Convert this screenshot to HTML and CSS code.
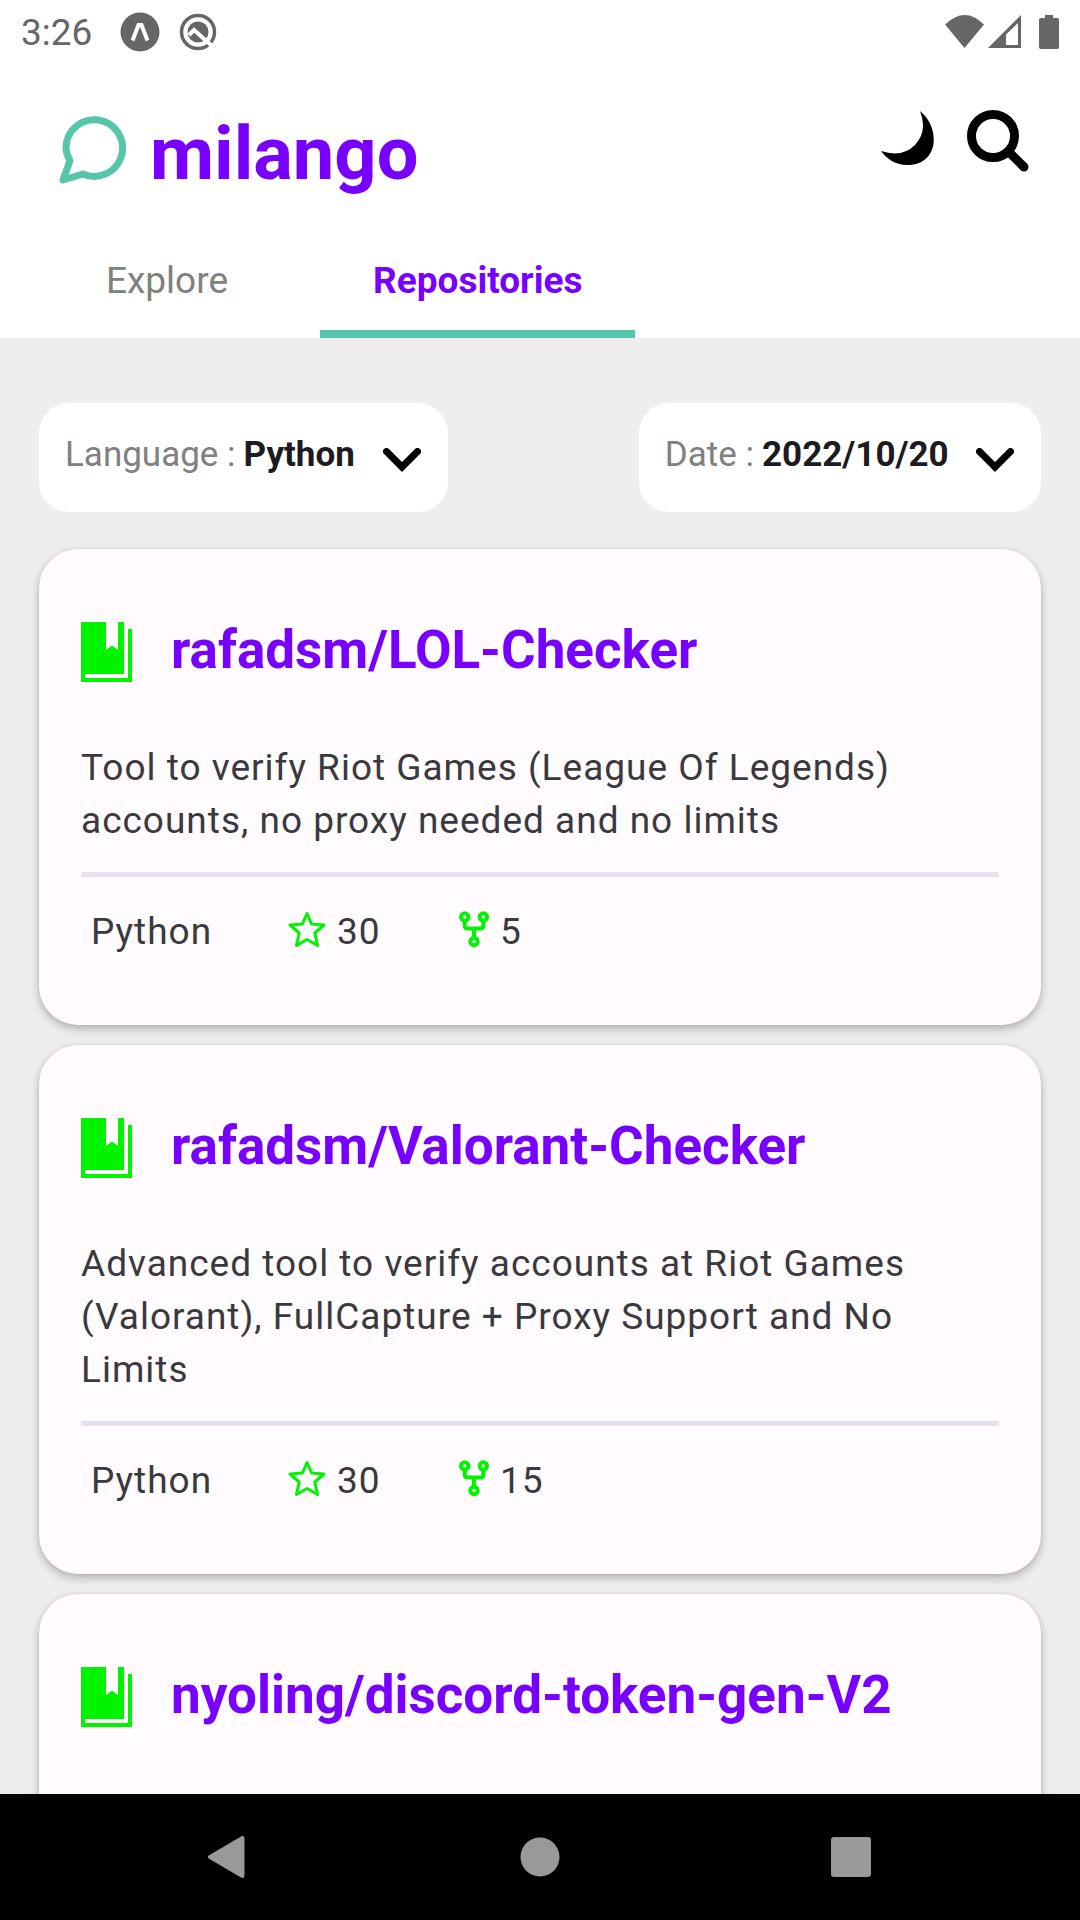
FILE: index.html
```html
<!DOCTYPE html>
<html lang="en">
<head>
<meta charset="utf-8">
<meta name="viewport" content="width=device-width, initial-scale=1">
<title>milango</title>
<link rel="stylesheet" href="styles.css">
</head>
<body>
<svg class="sprite" aria-hidden="true">
  <symbol id="book" viewBox="0 0 51 60"><path fill-rule="evenodd" d="M0 0H25V28L31 23.500L37 28V0H43V52H4V56H47V7H51V60H0Z"/></symbol>
  <symbol id="star" viewBox="0 0 38 38"><path d="M19 3.500L23.600 14L36 15L26.800 23L29.600 35.500L19 29.500L8.400 35.500L11.200 23L2 15L14.400 14Z" fill="none" stroke="currentColor" stroke-width="3" stroke-linejoin="round"/></symbol>
  <symbol id="fork" viewBox="0 0 30 38"><g fill="none" stroke="currentColor" stroke-width="4"><circle cx="5.700" cy="7" r="3.700"/><circle cx="24.300" cy="7" r="3.700"/><circle cx="15" cy="31.500" r="3.700"/><path d="M5.700 11V15.500Q5.700 18.500 8.700 18.500H21.300Q24.300 18.500 24.300 15.500V11M15 18.500V27.500"/></g></symbol>
  <symbol id="chevron" viewBox="0 0 38 24"><path d="M3.500 3.500L19 19L34.500 3.500" fill="none" stroke="currentColor" stroke-width="7" stroke-linecap="round"/></symbol>
</svg>
<div class="app">
  <header class="header">
    <div class="status">
      <span class="time">3:26</span>
      <svg class="notice" viewBox="0 0 40 40" aria-hidden="true"><circle cx="20" cy="20" r="19.500" fill="currentColor"/><path d="M12.500 28.500L18.500 13H21.500L27.500 28.500" fill="none" stroke="#fff" stroke-width="4"/></svg>
      <svg class="notice" viewBox="0 0 40 40" aria-hidden="true"><circle cx="20" cy="20" r="16.500" fill="none" stroke="currentColor" stroke-width="3.500"/><circle cx="20" cy="20" r="10.500" fill="currentColor"/><path d="M11 23L16 18L34 34" fill="none" stroke="#fff" stroke-width="4"/></svg>
      <span class="signals">
        <svg width="40" height="34" viewBox="0 0 40 34" aria-hidden="true"><path fill="currentColor" d="M0 9.500Q20 -9.500 39 9.500L19.500 33Z"/></svg>
        <svg width="34" height="34" viewBox="0 0 34 34" aria-hidden="true"><path fill="currentColor" fill-rule="evenodd" d="M0 33L33 0V33ZM18 19.500V30H30V8Z"/></svg>
        <svg class="battery" width="20" height="34" viewBox="0 0 20 34" aria-hidden="true"><path fill="currentColor" d="M6 0H14V3H18Q20 3 20 5V32Q20 34 18 34H2Q0 34 0 32V5Q0 3 2 3H6Z"/></svg>
      </span>
    </div>
    <div class="brand-row">
      <svg class="logo" viewBox="0 0 68 68" aria-hidden="true"><path d="M4 64L11 44.500Q7 38 7 31.500A28.300 28.300 0 1 1 24 58Z" fill="none" stroke="currentColor" stroke-width="7" stroke-linejoin="round"/></svg>
      <h1 class="brand">milango</h1>
      <div class="actions">
        <button class="icon-button" type="button" aria-label="Dark mode"><svg width="54" height="62" viewBox="0 0 54 62" aria-hidden="true"><path fill="currentColor" d="M39 1C60 18 58 55 26 55C14 55 5 48 0 41Q21 48 34 35Q47 21 39 1Z"/></svg></button>
        <button class="icon-button" type="button" aria-label="Search"><svg width="62" height="62" viewBox="0 0 62 62" aria-hidden="true"><g fill="none" stroke="currentColor" stroke-width="9" stroke-linecap="round"><circle cx="26" cy="26" r="21.500"/><path d="M42 42L57 57"/></g></svg></button>
      </div>
    </div>
    <nav class="tabs">
      <a class="tab" href="#explore">Explore</a>
      <a class="tab tab-active" href="#repositories" aria-current="page">Repositories</a>
    </nav>
  </header>
  <main class="content">
    <div class="filters">
      <label class="filter"><span>Language :</span>
        <select class="filter-value"><option>Python</option></select>
        <svg class="chevron" aria-hidden="true"><use href="#chevron"/></svg></label>
      <label class="filter"><span>Date :</span>
        <select class="filter-value"><option>2022/10/20</option></select>
        <svg class="chevron" aria-hidden="true"><use href="#chevron"/></svg></label>
    </div>
    <article class="card">
      <h2 class="card-title"><svg class="book" aria-hidden="true"><use href="#book"/></svg>rafadsm/LOL-Checker</h2>
      <p class="description">Tool to verify Riot Games (League Of Legends) accounts, no proxy needed and no limits</p>
      <div class="stats">
        <span class="language">Python</span>
        <span class="stat"><svg class="star" aria-hidden="true"><use href="#star"/></svg>30</span>
        <span class="stat"><svg class="fork" aria-hidden="true"><use href="#fork"/></svg>5</span>
      </div>
    </article>
    <article class="card">
      <h2 class="card-title"><svg class="book" aria-hidden="true"><use href="#book"/></svg>rafadsm/Valorant-Checker</h2>
      <p class="description">Advanced tool to verify accounts at Riot Games (Valorant), FullCapture + Proxy Support and No Limits</p>
      <div class="stats">
        <span class="language">Python</span>
        <span class="stat"><svg class="star" aria-hidden="true"><use href="#star"/></svg>30</span>
        <span class="stat"><svg class="fork" aria-hidden="true"><use href="#fork"/></svg>15</span>
      </div>
    </article>
    <article class="card">
      <h2 class="card-title"><svg class="book" aria-hidden="true"><use href="#book"/></svg>nyoling/discord-token-gen-V2</h2>
    </article>
  </main>
  <footer class="system-nav">
    <button class="nav-button" type="button" aria-label="Back"><svg width="42" height="42" viewBox="0 0 42 42" aria-hidden="true"><path fill="currentColor" d="M1.500 19L33 .5Q36.500 -1 36.500 3V39Q36.500 43 33 41.500L1.500 23Q-2 21 1.500 19Z"/></svg></button>
    <button class="nav-button" type="button" aria-label="Home"><svg width="42" height="42" viewBox="0 0 42 42" aria-hidden="true"><circle cx="21" cy="21" r="19.500" fill="currentColor"/></svg></button>
    <button class="nav-button" type="button" aria-label="Recent apps"><svg width="42" height="42" viewBox="0 0 42 42" aria-hidden="true"><rect x="1" y="1" width="40" height="40" rx="3" fill="currentColor"/></svg></button>
  </footer>
</div>
</body>
</html>
```
FILE: styles.css
```css
* {
  box-sizing: border-box;
}

body {
  margin: 0;
  background: #eee;
  color: #1c1b1f;
  font-family: Roboto, "Liberation Sans", sans-serif;
  font-size: 37px;
}

svg {
  display: block;
  flex: none;
}

button {
  padding: 0;
  border: 0;
  background: none;
  color: inherit;
}

.sprite {
  display: none;
}

.app {
  display: flex;
  flex-direction: column;
  height: 100vh;
}

.header {
  flex: none;
  background: #fff;
}

/* Status bar */
.status {
  display: flex;
  align-items: center;
  height: 64px;
  padding: 0 21px;
  color: #666;
}

.time {
  margin-right: 28px;
}

.notice {
  width: 40px;
  height: 40px;
  margin-right: 18px;
}

.signals {
  display: flex;
  gap: 3px;
  margin-left: auto;
}

.battery {
  margin-left: 14px;
}

/* Brand */
.brand-row {
  display: flex;
  align-items: center;
  height: 180px;
  padding: 0 51px 0 59px;
}

.logo {
  width: 68px;
  height: 68px;
  margin-bottom: 8px;
  color: #55c6a9;
}

.brand {
  margin: 0 0 0 23px;
  color: #70f;
  font-size: 74px;
  line-height: 88px;
}

.actions {
  display: flex;
  gap: 32px;
  margin-left: auto;
  padding-bottom: 26px;
  color: #000;
}

/* Tabs */
.tabs {
  display: flex;
  padding-left: 14px;
}

.tab {
  min-width: 306px;
  padding: 15px 53px 27px;
  border-bottom: 8px solid transparent;
  color: #808080;
  line-height: 44px;
  text-align: center;
  text-decoration: none;
}

.tab-active {
  border-color: #55c6a9;
  color: #70f;
  font-weight: 700;
}

/* Repository list */
.content {
  display: flex;
  flex: 1;
  flex-direction: column;
  gap: 20px;
  min-height: 0;
  padding: 65px 39px 20px;
  overflow: hidden;
}

.filters {
  display: flex;
  flex: none;
  justify-content: space-between;
  margin-bottom: 17px;
}

.filter {
  display: flex;
  align-items: center;
  height: 109px;
  padding: 0 27px 6px 26px;
  border-radius: 30px;
  background: #fff;
  color: #808080;
  font-size: 35px;
}

.filter-value {
  margin: 0 27px 0 8px;
  padding: 0;
  border: 0;
  background: none;
  color: #1c1b1f;
  font: inherit;
  font-weight: 700;
  appearance: none;
}

.chevron {
  width: 38px;
  height: 24px;
  margin-top: 10px;
  color: #000;
}

.card {
  flex: none;
  min-height: 320px;
  padding: 69px 42px 67px;
  border-radius: 39px;
  background: #fffbfe;
  box-shadow: 0 4px 10px rgba(0, 0, 0, .26), 0 0 3px rgba(0, 0, 0, .08);
}

.card-title {
  display: flex;
  align-items: center;
  gap: 39px;
  margin: 0;
  color: #70f;
  font-size: 53px;
  line-height: 64px;
}

.book {
  width: 51px;
  height: 60px;
  margin-top: 4px;
  color: #00f400;
  fill: currentColor;
}

.description {
  margin: 59px 0 0;
  color: #3a393d;
  letter-spacing: 1px;
  line-height: 53px;
}

.stats {
  display: flex;
  align-items: center;
  margin-top: 25px;
  padding: 28px 10px 0;
  border-top: 5px solid #e6e0ec;
  color: #3a393d;
  letter-spacing: 1px;
  line-height: 53px;
}

.language {
  width: 197px;
}

.stat {
  display: flex;
  align-items: center;
  gap: 11px;
  min-width: 171px;
}

.star,
.fork {
  height: 38px;
  margin-bottom: 6px;
  color: #00f400;
}

.star {
  width: 38px;
}

.fork {
  width: 30px;
}

/* System navigation */
.system-nav {
  display: flex;
  flex: none;
  align-items: center;
  justify-content: center;
  gap: 227px;
  height: 126px;
  background: #000;
  color: #999;
}

.nav-button {
  display: flex;
  justify-content: center;
  width: 84px;
}
```
